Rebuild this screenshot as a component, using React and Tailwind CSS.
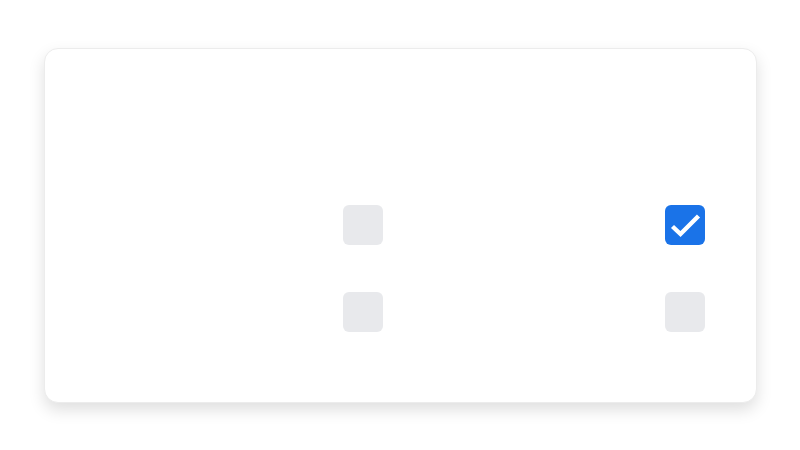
export default function App() {
  const Box = ({ checked }) =>
    checked ? (
      <div className="w-10 h-10 rounded-md bg-[#1a73e8] flex items-center justify-center">
        <svg width="40" height="40" viewBox="0 0 40 40" fill="none">
          <path d="M7.5 21.5 L15.5 29 L33.5 11" stroke="white" strokeWidth="4.4" strokeLinecap="butt" strokeLinejoin="miter" />
        </svg>
      </div>
    ) : (
      <div className="w-10 h-10 rounded-md bg-[#e8e9ec]" />
    );
  return (
    <div className="w-[800px] h-[450px] bg-white flex items-center pl-[44px] font-['Liberation_Sans',sans-serif]">
      <div className="w-[713px] h-[355px] bg-white rounded-[14px] border border-[#ececec] shadow-[0_7px_16px_rgba(0,0,0,0.13)] flex flex-col pt-[156px]">
        <div className="flex h-10">
          <div className="w-[298px]" />
          <Box />
          <div className="w-[282px]" />
          <Box checked />
        </div>
        <div className="flex h-10 mt-[47px]">
          <div className="w-[298px]" />
          <Box />
          <div className="w-[282px]" />
          <Box />
        </div>
      </div>
    </div>
  );
}
